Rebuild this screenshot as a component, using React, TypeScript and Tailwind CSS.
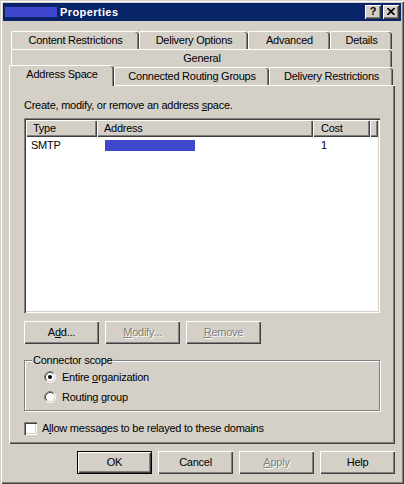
import React from 'react';

// classic 3D frames
const raised = 'shadow-[inset_1px_1px_0_#ffffff,inset_-1px_-1px_0_#404040,inset_-2px_-2px_0_#808080]';
const sunken = 'shadow-[inset_1px_1px_0_#808080,inset_2px_2px_0_#404040,inset_-1px_-1px_0_#ffffff,inset_-2px_-2px_0_#d4d0c8]';
const disabledText = 'text-[#808080] [text-shadow:1px_1px_0_#ffffff]';

function PushButton({ children, disabled, isDefault }: { children: React.ReactNode; disabled?: boolean; isDefault?: boolean }) {
  return (
    <div
      className={`w-[75px] h-[23px] flex items-center justify-center bg-[#d4d0c8] ${raised} ${
        isDefault ? 'border border-black' : ''
      } ${disabled ? disabledText : 'text-black'}`}
    >
      {children}
    </div>
  );
}

function Radio({ checked }: { checked?: boolean }) {
  return (
    <svg width="12" height="12" viewBox="0 0 12 12" className="shrink-0">
      <circle cx="6" cy="6" r="5" fill="#ffffff" />
      <path d="M2.11 9.89 A5.5 5.5 0 0 1 9.89 2.11" stroke="#808080" fill="none" />
      <path d="M9.89 2.11 A5.5 5.5 0 0 1 2.11 9.89" stroke="#ffffff" fill="none" />
      <path d="M2.82 9.18 A4.5 4.5 0 0 1 9.18 2.82" stroke="#404040" fill="none" />
      <path d="M9.18 2.82 A4.5 4.5 0 0 1 2.82 9.18" stroke="#d4d0c8" fill="none" />
      {checked && <circle cx="6" cy="6" r="2" fill="#000000" />}
    </svg>
  );
}

const tabBase =
  'h-[18px] flex items-center justify-center border-l border-t border-white rounded-tl-[2px] rounded-tr-[3px] shadow-[inset_-1px_0_0_#404040,inset_-2px_0_0_#808080]';

export default function App() {
  return (
    <div className="w-[404px] h-[484px] bg-[#d4d0c8] p-[3px] flex flex-col text-[11px] tracking-[-0.25px] text-black font-['Liberation_Sans',Arial,sans-serif] shadow-[inset_1px_1px_0_#d4d0c8,inset_2px_2px_0_#ffffff,inset_-1px_-1px_0_#404040,inset_-2px_-2px_0_#808080]">
      {/* Title bar */}
      <div className="h-[18px] bg-[#0a246a] flex items-center px-[2px]">
        <div className="w-[52px] h-[10px] bg-[#3f48cc]" />
        <span className="ml-[3px] text-white font-bold tracking-[0.4px] leading-none">Properties</span>
        <div className="ml-auto flex gap-[2px]">
          <div className={`w-[16px] h-[14px] bg-[#d4d0c8] flex items-center justify-center font-bold text-[11px] leading-none pb-[1px] ${raised}`}>
            ?
          </div>
          <div className={`w-[16px] h-[14px] bg-[#d4d0c8] flex items-center justify-center pb-[1px] ${raised}`}>
            <svg width="8" height="7" viewBox="0 0 8 7">
              <path d="M0.5 0 L7.5 7 M7.5 0 L0.5 7" stroke="#000000" strokeWidth="1.6" />
            </svg>
          </div>
        </div>
      </div>

      <div className="flex flex-col px-[6px] mt-[10px]">
        {/* Tab rows */}
        <div className="flex ml-[2px]">
          <div className={`${tabBase} w-[128px]`}>Content Restrictions</div>
          <div className={`${tabBase} w-[109px]`}>Delivery Options</div>
          <div className={`${tabBase} w-[82px]`}>Advanced</div>
          <div className={`${tabBase} w-[62px]`}>Details</div>
        </div>
        <div className="flex ml-[2px]">
          <div className={`${tabBase} w-[381px]`}>General</div>
        </div>
        <div className="flex h-[18px] items-end">
          <div className={`${tabBase} relative z-10 h-[21px] -mb-[1px] w-[105px] bg-[#d4d0c8] pb-[3px]`}>Address Space</div>
          <div className={`${tabBase} w-[155px]`}>Connected Routing Groups</div>
          <div className={`${tabBase} w-[124px]`}>Delivery Restrictions</div>
        </div>

        {/* Page */}
        <div className={`h-[359px] flex flex-col px-[15px] pt-[14px] ${raised}`}>
          <div className="leading-[13px]">
            Create, modify, or remove an address <u>s</u>pace.
          </div>

          <div className={`mt-[6px] h-[195px] bg-white p-[2px] flex flex-col ${sunken}`}>
            <div className="flex h-[17px] shrink-0">
              <div className={`w-[71px] bg-[#d4d0c8] flex items-center pl-[7px] ${raised}`}>Type</div>
              <div className={`w-[216px] bg-[#d4d0c8] flex items-center pl-[7px] ${raised}`}>Address</div>
              <div className={`w-[57px] bg-[#d4d0c8] flex items-center pl-[8px] ${raised}`}>Cost</div>
              <div className={`flex-1 bg-[#d4d0c8] ${raised}`} />
            </div>
            <div className="flex h-[17px] items-center">
              <div className="w-[71px] pl-[5px]">SMTP</div>
              <div className="w-[216px] pl-[8px]">
                <div className="w-[90px] h-[11px] bg-[#3f48cc]" />
              </div>
              <div className="w-[57px] pl-[8px]">1</div>
            </div>
          </div>

          <div className="flex gap-[6px] mt-[8px]">
            <PushButton>
              A<u>d</u>d...
            </PushButton>
            <PushButton disabled>
              <u>M</u>odify...
            </PushButton>
            <PushButton disabled>
              <u>R</u>emove
            </PushButton>
          </div>

          <fieldset className="mt-[10px] border border-[#808080] shadow-[1px_1px_0_#ffffff,inset_1px_1px_0_#ffffff]">
            <legend className="ml-[7px] px-[1px] leading-[13px] bg-[#d4d0c8]">Connector scope</legend>
            <div className="flex flex-col pl-[19px] pb-[3px]">
              <div className="h-[20px] flex items-center gap-[6px]">
                <Radio checked />
                <span>
                  Entire <u>o</u>rganization
                </span>
              </div>
              <div className="h-[20px] flex items-center gap-[6px]">
                <Radio />
                <span>Routing group</span>
              </div>
            </div>
          </fieldset>

          <div className="mt-[9px] flex items-center gap-[5px]">
            <div className={`w-[13px] h-[13px] bg-white ${sunken}`} />
            <span>
              A<u>l</u>low messages to be relayed to these domains
            </span>
          </div>
        </div>

        {/* Dialog buttons */}
        <div className="flex justify-end gap-[6px] mt-[7px]">
          <PushButton isDefault>OK</PushButton>
          <PushButton>Cancel</PushButton>
          <PushButton disabled>
            <u>A</u>pply
          </PushButton>
          <PushButton>Help</PushButton>
        </div>
      </div>
    </div>
  );
}
